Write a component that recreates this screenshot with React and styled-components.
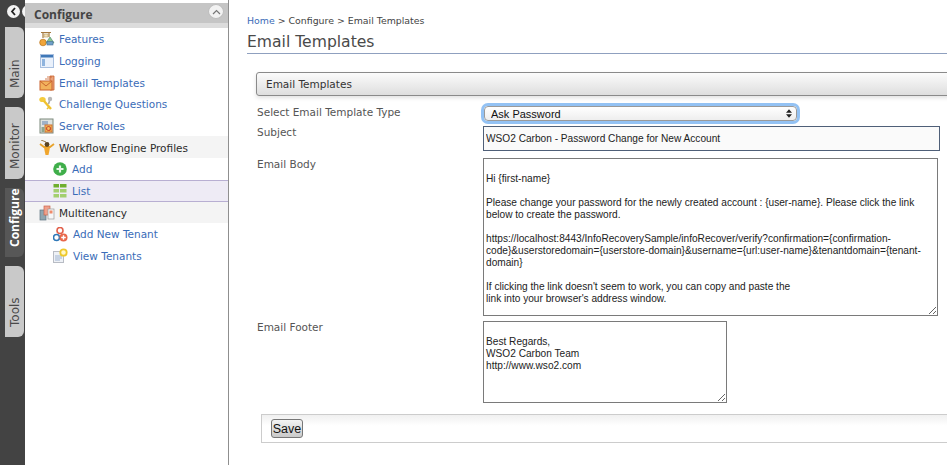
import styled, { createGlobalStyle } from 'styled-components'

const GlobalStyle = createGlobalStyle`
  html, body {
    margin: 0;
    padding: 0;
    height: 465px;
    overflow: hidden;
    background: #ffffff;
  }
  #root {
    height: 465px;
  }
`

const sideFont = `"DejaVu Sans", Verdana, sans-serif`
const boldFont = `"Open Sans", "DejaVu Sans", sans-serif`
const formFont = `"Liberation Sans", Arial, sans-serif`

const Page = styled.div`
  display: flex;
  height: 465px;
  font-family: ${sideFont};
`

/* Dark rail holding the vertical tabs */
const Rail = styled.div`
  position: relative;
  flex: 0 0 25px;
  box-sizing: border-box;
  padding: 27px 1px 0 5px;
  display: flex;
  flex-direction: column;
  gap: 9px;
  overflow: hidden;
  background: #434343;
`

const Toggle = styled.div`
  position: absolute;
  left: ${({ $left }) => $left}px;
  top: 5px;
  width: 13px;
  height: 13px;
  border-radius: 50%;
  background: #f4f4f4;
  display: flex;
  align-items: center;
  justify-content: center;
`

const Tab = styled.div`
  box-sizing: border-box;
  height: ${({ $height }) => $height}px;
  padding-top: 10px;
  border-radius: 6px 0 0 6px;
  display: flex;
  align-items: center;
  justify-content: flex-start;
  writing-mode: vertical-rl;
  transform: rotate(180deg);
  font-family: ${({ $active }) => ($active ? boldFont : sideFont)};
  font-size: 12px;
  font-weight: ${({ $active }) => ($active ? 700 : 400)};
  color: ${({ $active }) => ($active ? '#ffffff' : '#4a4a4a')};
  background: ${({ $active }) => ($active ? '#575757' : '#c9c9c9')};
`

/* Menu panel */
const Nav = styled.nav`
  flex: 0 0 203px;
  border-right: 1px solid #8f8f8f;
  padding-top: 3px;
  background: #ffffff;
`

const NavHeader = styled.div`
  position: relative;
  box-sizing: border-box;
  height: 25px;
  padding: 0 0 3px 9px;
  display: flex;
  align-items: center;
  font-family: ${boldFont};
  font-size: 12px;
  font-weight: 700;
  color: #444444;
  background: linear-gradient(to bottom, #c5c5c5 0, #c5c5c5 20px, #dcdcdc 20px);
`

const Collapse = styled.div`
  position: absolute;
  right: 4px;
  top: 1px;
  box-sizing: border-box;
  width: 16px;
  height: 15px;
  border-radius: 50%;
  border: 1px solid #bdbdbd;
  background: #f2f2f2;
  display: flex;
  align-items: center;
  justify-content: center;
`

const NavRow = styled.div`
  box-sizing: border-box;
  height: 21.7px;
  display: flex;
  align-items: center;
  gap: ${({ $child }) => ($child ? 5 : 4)}px;
  padding-left: ${({ $child }) => ($child ? 28 : 14)}px;
  padding-top: ${({ $child }) => ($child ? 0 : 1)}px;
  font-size: 10.5px;
  color: ${({ $group }) => ($group ? '#2b2b2b' : '#3a6cb8')};
  background: ${({ $group, $selected }) =>
    $selected ? '#eeebf5' : $group ? '#f4f4f4' : 'transparent'};
  border-top: ${({ $selected }) => ($selected ? '1px solid #b8afd2' : 'none')};
  border-bottom: ${({ $selected }) => ($selected ? '1px solid #b8afd2' : 'none')};
`

const IconBox = styled.svg`
  flex: 0 0 auto;
  width: ${({ $size }) => $size || 16}px;
  height: ${({ $size }) => $size || 16}px;
`

/* Main content */
const Main = styled.main`
  flex: 1;
  min-width: 0;
  overflow: hidden;
  padding: 14px 0 0 18px;
`

const Breadcrumb = styled.div`
  font-size: 9.4px;
  line-height: 13px;
  color: #444444;
  span {
    color: #3a6cb8;
  }
`

const Heading = styled.h1`
  margin: 5px 0 0;
  font-size: 15.6px;
  line-height: 21px;
  font-weight: 400;
  color: #4a4a4a;
  border-bottom: 1px solid #8fa0bf;
`

const Panel = styled.section`
  margin: 18px -20px 0 9px;
`

const SectionBar = styled.div`
  box-sizing: border-box;
  height: 24px;
  padding-left: 9px;
  display: flex;
  align-items: center;
  font-size: 10.5px;
  color: #333333;
  border: 1px solid #8a8a8a;
  border-radius: 3px;
  background: linear-gradient(to bottom, #fbfbfb, #dedede);
  box-shadow: 0 2px 4px rgba(0, 0, 0, 0.12);
`

const FormGrid = styled.div`
  display: grid;
  grid-template-columns: 227px 1fr;
  margin-top: 7px;
`

const Label = styled.label`
  font-size: 10.5px;
  line-height: 12px;
  padding-left: 1px;
  color: #555555;
  padding-top: ${({ $top }) => $top || 0}px;
`

const Field = styled.div`
  margin-bottom: ${({ $gap }) => $gap}px;
  display: flex;
`

const SelectWrap = styled.div`
  position: relative;
  margin: 3px 0 0 1px;
  width: 313px;
  height: 15px;
  box-sizing: border-box;
  border-radius: 4px;
  box-shadow: 0 0 0 3px #93c2f4;
`

const Select = styled.select`
  display: block;
  width: 100%;
  height: 100%;
  box-sizing: border-box;
  appearance: none;
  padding: 0 0 0 6px;
  font-family: ${formFont};
  font-size: 11px;
  color: #111111;
  border: 1px solid #9a9a9a;
  border-radius: 4px;
  background: linear-gradient(to bottom, #ffffff, #eeeeee);
  outline: none;
`

const SelectArrows = styled.svg`
  position: absolute;
  right: 5px;
  top: 3px;
  width: 6px;
  height: 9px;
`

const TextInput = styled.input`
  box-sizing: border-box;
  width: 457px;
  height: 25px;
  padding: 0 2px;
  font-family: ${formFont};
  font-size: 10.15px;
  color: #222222;
  border: 1px solid #4f5f78;
  background: #fafafa;
  outline: none;
`

const TextArea = styled.textarea`
  box-sizing: border-box;
  display: block;
  width: ${({ $width }) => $width}px;
  height: ${({ $height }) => $height}px;
  margin: 0;
  padding: 2px 2px 1px;
  font-family: ${formFont};
  font-size: 10.15px;
  line-height: 12px;
  color: #222222;
  border: 1px solid #7a7a7a;
  border-radius: 0;
  background: #ffffff;
  outline: none;
  resize: both;
  overflow: hidden;
`

const ButtonBar = styled.div`
  box-sizing: border-box;
  height: 29px;
  margin: 11px 0 0 5px;
  padding-left: 9px;
  display: flex;
  align-items: center;
  border: 1px solid #cccccc;
  background: linear-gradient(to bottom, #f0f0f0, #ffffff 40%);
`

const SaveButton = styled.button`
  box-sizing: border-box;
  width: 32px;
  height: 19px;
  padding: 0;
  font-family: ${formFont};
  font-size: 12.5px;
  color: #111111;
  border: 1px solid #777777;
  border-radius: 3px;
  background: linear-gradient(to bottom, #f4f4f4, #c9c9c9);
`

/* Menu icons, drawn by hand to follow the originals */
const FeaturesIcon = () => (
  <IconBox viewBox="0 0 16 16">
    <path d="M2 1.5h10M4 1v6M10 1v5" stroke="#a5793f" strokeWidth="1.2" fill="none" />
    <rect x="5" y="3" width="4" height="3" fill="#f2e2b8" stroke="#b59a63" strokeWidth="0.6" />
    <circle cx="4" cy="11.5" r="3.3" fill="#f0a53a" stroke="#b9741c" strokeWidth="0.7" />
    <path d="M11 6l4 6H7z" fill="#8fc48f" stroke="#4f8f6f" strokeWidth="0.7" />
    <rect x="8" y="10.5" width="6" height="3.5" fill="#6fa0c8" stroke="#476f97" strokeWidth="0.6" />
  </IconBox>
)

const LoggingIcon = () => (
  <IconBox viewBox="0 0 16 16">
    <rect x="1.5" y="1.5" width="13" height="13" fill="#eaf1fb" stroke="#a9c0e0" />
    <rect x="2" y="2" width="12" height="2.5" fill="#3f78b8" />
    <rect x="3" y="6" width="3" height="7" fill="#8fb4de" />
  </IconBox>
)

const MailIcon = () => (
  <IconBox viewBox="0 0 16 16">
    <path d="M11 1h4v14h-4z" fill="#e9a27a" stroke="#c9632f" strokeWidth="0.8" />
    <path d="M6 4h5M8 2h5" stroke="#c9632f" strokeWidth="0.8" />
    <rect x="1" y="6" width="12" height="9" fill="#f2b25c" stroke="#c9632f" />
    <path d="M1 6l6 5 6-5" fill="none" stroke="#c9632f" />
  </IconBox>
)

const KeysIcon = () => (
  <IconBox viewBox="0 0 16 16">
    <ellipse cx="3.5" cy="3.5" rx="3.2" ry="2.6" fill="#f4cb3c" />
    <path d="M5 5l7 8" stroke="#efc12f" strokeWidth="2.4" />
    <path d="M10 11l-2 2" stroke="#efc12f" strokeWidth="1.6" />
    <circle cx="11" cy="3" r="2.2" fill="#b8b8b8" />
    <path d="M10.5 5l-1 3" stroke="#a8a8a8" strokeWidth="1.6" />
  </IconBox>
)

const ServerIcon = () => (
  <IconBox viewBox="0 0 16 16">
    <rect x="1" y="1" width="13" height="14" fill="#dfe3e0" stroke="#7c8a7c" />
    <rect x="3" y="3" width="6" height="4" fill="#9fb2c8" />
    <rect x="6" y="7" width="7" height="7" fill="#f4c05a" stroke="#d0702f" />
    <circle cx="9.5" cy="10.5" r="2" fill="none" stroke="#d0502f" strokeWidth="1.2" />
    <rect x="2.5" y="9" width="3" height="5" fill="#8fa68f" />
  </IconBox>
)

const PersonIcon = () => (
  <IconBox viewBox="0 0 16 16">
    <path d="M1 4l4 3h6l4-3" fill="none" stroke="#e8a32c" strokeWidth="1.8" />
    <path d="M2 0l5 2" stroke="#9a7a4a" strokeWidth="1" />
    <circle cx="8" cy="4.5" r="2.4" fill="#5a4320" />
    <path d="M5 7.5h6L9.5 15h-3z" fill="#f0a52c" />
  </IconBox>
)

const AddIcon = () => (
  <IconBox $size={14} viewBox="0 0 14 14">
    <circle cx="7" cy="7" r="6.8" fill="#3fae4a" />
    <path d="M7 3.5v7M3.5 7h7" stroke="#e8f7e8" strokeWidth="2.2" />
  </IconBox>
)

const ListIcon = () => (
  <IconBox $size={14} viewBox="0 0 14 14">
    <rect x="0.5" y="0" width="5.5" height="3.5" fill="#6fae2f" />
    <rect x="7" y="0" width="6.5" height="3.5" fill="#6fae2f" />
    <rect x="0.5" y="5" width="5.5" height="3.5" fill="#a3cf6f" />
    <rect x="7" y="5" width="6.5" height="3.5" fill="#a3cf6f" />
    <rect x="0.5" y="10" width="5.5" height="3.5" fill="#a3cf6f" />
    <rect x="7" y="10" width="6.5" height="3.5" fill="#a3cf6f" />
  </IconBox>
)

const TenancyIcon = () => (
  <IconBox viewBox="0 0 16 16">
    <rect x="1" y="5" width="6" height="10" fill="#8fa6b0" stroke="#5f7480" strokeWidth="0.7" />
    <rect x="5" y="1" width="6" height="9" fill="#f0a08a" stroke="#c8654a" strokeWidth="0.7" />
    <rect x="9" y="4" width="6" height="10" fill="#f7f7f7" stroke="#9a9a9a" strokeWidth="0.7" />
    <rect x="10.5" y="5.5" width="3" height="3" fill="#ef8a6a" />
  </IconBox>
)

const AddTenantIcon = () => (
  <IconBox $size={15} viewBox="0 0 15 15">
    <circle cx="7" cy="3.5" r="3" fill="#fff" stroke="#e2604a" strokeWidth="1.6" />
    <circle cx="3.5" cy="10.5" r="3" fill="#fff" stroke="#2f78b8" strokeWidth="1.6" />
    <circle cx="10.5" cy="10.5" r="4" fill="#e8674a" />
    <path d="M10.5 8.2v4.6M8.2 10.5h4.6" stroke="#ffffff" strokeWidth="1.4" />
  </IconBox>
)

const ViewTenantIcon = () => (
  <IconBox $size={15} viewBox="0 0 15 15">
    <rect x="0.5" y="3.5" width="10" height="11" fill="#eef1f6" stroke="#b8bcc4" />
    <path d="M2 8h7M2 10h7M2 12h5" stroke="#9fb4d0" />
    <circle cx="10.5" cy="4.5" r="3.2" fill="#fff7c8" stroke="#eec92a" strokeWidth="1.8" />
  </IconBox>
)

const menu = [
  { label: 'Features', icon: <FeaturesIcon /> },
  { label: 'Logging', icon: <LoggingIcon /> },
  { label: 'Email Templates', icon: <MailIcon /> },
  { label: 'Challenge Questions', icon: <KeysIcon /> },
  { label: 'Server Roles', icon: <ServerIcon /> },
  { label: 'Workflow Engine Profiles', icon: <PersonIcon />, group: true },
  { label: 'Add', icon: <AddIcon />, child: true },
  { label: 'List', icon: <ListIcon />, child: true, selected: true },
  { label: 'Multitenancy', icon: <TenancyIcon />, group: true },
  { label: 'Add New Tenant', icon: <AddTenantIcon />, child: true },
  { label: 'View Tenants', icon: <ViewTenantIcon />, child: true },
]

const bodyText = `
Hi {first-name}

Please change your password for the newly created account : {user-name}. Please click the link below to create the password.

https://localhost:8443/InfoRecoverySample/infoRecover/verify?confirmation={confirmation-code}&userstoredomain={userstore-domain}&username={url:user-name}&tenantdomain={tenant-domain}

If clicking the link doesn't seem to work, you can copy and paste the
link into your browser's address window.`

const footerText = `
Best Regards,
WSO2 Carbon Team
http://www.wso2.com`

function App() {
  return (
    <Page>
      <GlobalStyle />
      <Rail>
        <Toggle $left={7}>
          <svg width="7" height="9" viewBox="0 0 7 9">
            <path d="M5 1L2 4.5 5 8" fill="none" stroke="#222222" strokeWidth="1.8" />
          </svg>
        </Toggle>
        <Toggle $left={22} />
        <Tab $height={71}>Main</Tab>
        <Tab $height={72}>Monitor</Tab>
        <Tab $height={69} $active>
          Configure
        </Tab>
        <Tab $height={71}>Tools</Tab>
      </Rail>

      <Nav>
        <NavHeader>
          Configure
          <Collapse>
            <svg width="9" height="6" viewBox="0 0 9 6">
              <path d="M1 5l3.5-3.5L8 5" fill="none" stroke="#777777" strokeWidth="1.2" />
            </svg>
          </Collapse>
        </NavHeader>
        {menu.map((item) => (
          <NavRow
            key={item.label}
            $group={item.group}
            $child={item.child}
            $selected={item.selected}
          >
            {item.icon}
            {item.label}
          </NavRow>
        ))}
      </Nav>

      <Main>
        <Breadcrumb>
          <span>Home</span> &gt; Configure &gt; Email Templates
        </Breadcrumb>
        <Heading>Email Templates</Heading>
        <Panel>
          <SectionBar>Email Templates</SectionBar>
          <FormGrid>
            <Label $top={3}>Select Email Template Type</Label>
            <Field $gap={5}>
              <SelectWrap>
                <Select defaultValue="ask">
                  <option value="ask">Ask Password</option>
                </Select>
                <SelectArrows viewBox="0 0 7 10">
                  <path d="M3.5 0L7 4H0zM3.5 10L0 6h7z" fill="#222222" />
                </SelectArrows>
              </SelectWrap>
            </Field>
            <Label>Subject</Label>
            <Field $gap={7}>
              <TextInput readOnly value="WSO2 Carbon - Password Change for New Account" />
            </Field>
            <Label>Email Body</Label>
            <Field $gap={5}>
              <TextArea readOnly $width={455} $height={158} value={bodyText} />
            </Field>
            <Label>Email Footer</Label>
            <Field $gap={0}>
              <TextArea readOnly $width={244} $height={82} value={footerText} />
            </Field>
          </FormGrid>
          <ButtonBar>
            <SaveButton type="button">Save</SaveButton>
          </ButtonBar>
        </Panel>
      </Main>
    </Page>
  )
}

export default App
